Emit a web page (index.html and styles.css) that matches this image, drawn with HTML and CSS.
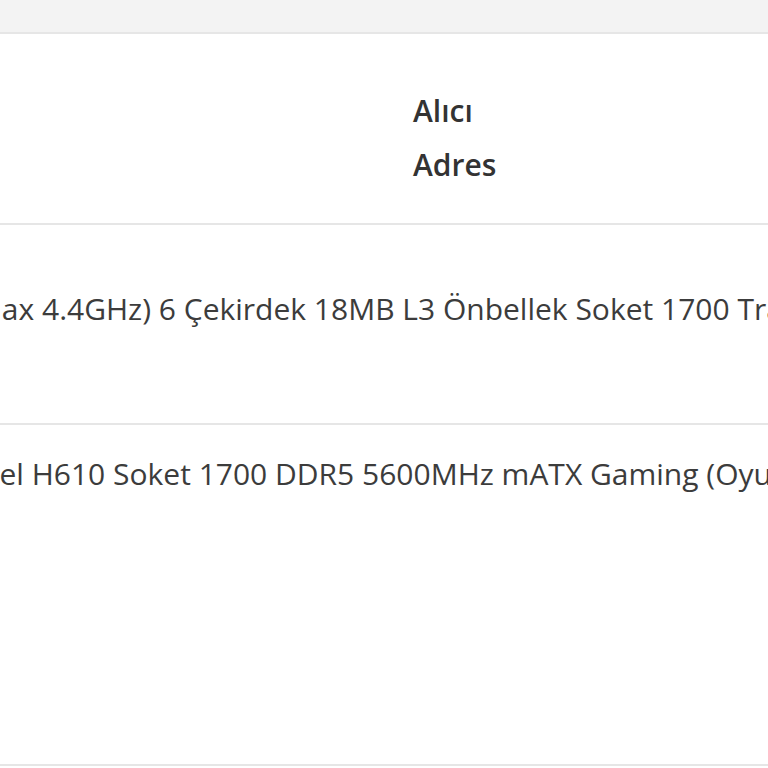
FILE: index.html
```html
<!DOCTYPE html>
<html lang="tr">
<head>
    <meta charset="UTF-8">
    <meta name="viewport" content="width=device-width, initial-scale=1.0">
    <title>Siparişler</title>
    <link rel="stylesheet" href="styles.css">
</head>
<body>
    <div class="orders">
        <div class="orders-top"></div>

        <div class="orders-head">
            <div class="head-cell">
                <span>Alıcı</span>
                <span>Adres</span>
            </div>
        </div>

        <div class="orders-row row-first">
            <span class="product product-cpu">(Max 4.4GHz) 6 Çekirdek 18MB L3 Önbellek Soket 1700 Tray İşlemci</span>
        </div>

        <div class="orders-row row-second">
            <span class="product product-board">Intel H610 Soket 1700 DDR5 5600MHz mATX Gaming (Oyuncu) Anakart</span>
        </div>
    </div>
</body>
</html>
```

FILE: styles.css
```css
:root {
    --text: #3c3c3c;
    --head: #333333;
    --line: #e6e6e6;
    --band: #f3f3f3;
    --white: #ffffff;
}

* {
    margin: 0;
    padding: 0;
    box-sizing: border-box;
}

body {
    background-color: var(--white);
    font-family: 'Open Sans', 'Noto Sans', sans-serif;
    color: var(--text);
    overflow: hidden;
}

.orders {
    width: 768px;
    height: 768px;
    overflow: hidden;
}

.orders-top {
    height: 34px;
    background-color: var(--band);
    border-bottom: 2px solid var(--line);
}

.orders-head {
    height: 191px;
    border-bottom: 2px solid var(--line);
    padding-left: 413px;
    padding-top: 50px;
}

.head-cell {
    display: flex;
    flex-direction: column;
    font-size: 30px;
    font-weight: 600;
    line-height: 54px;
    color: var(--head);
}

.orders-row {
    border-bottom: 2px solid var(--line);
    white-space: nowrap;
    overflow: hidden;
    font-size: 30px;
    line-height: 40px;
}

.row-first {
    height: 200px;
    padding-top: 64px;
}

.row-second {
    height: 341px;
    padding-top: 29px;
}

.product {
    display: inline-block;
}

/* the cell is cut by the window, so the text starts left of it */
.product-cpu {
    margin-left: -34px;
}

.product-board {
    margin-left: -38px;
}
```
